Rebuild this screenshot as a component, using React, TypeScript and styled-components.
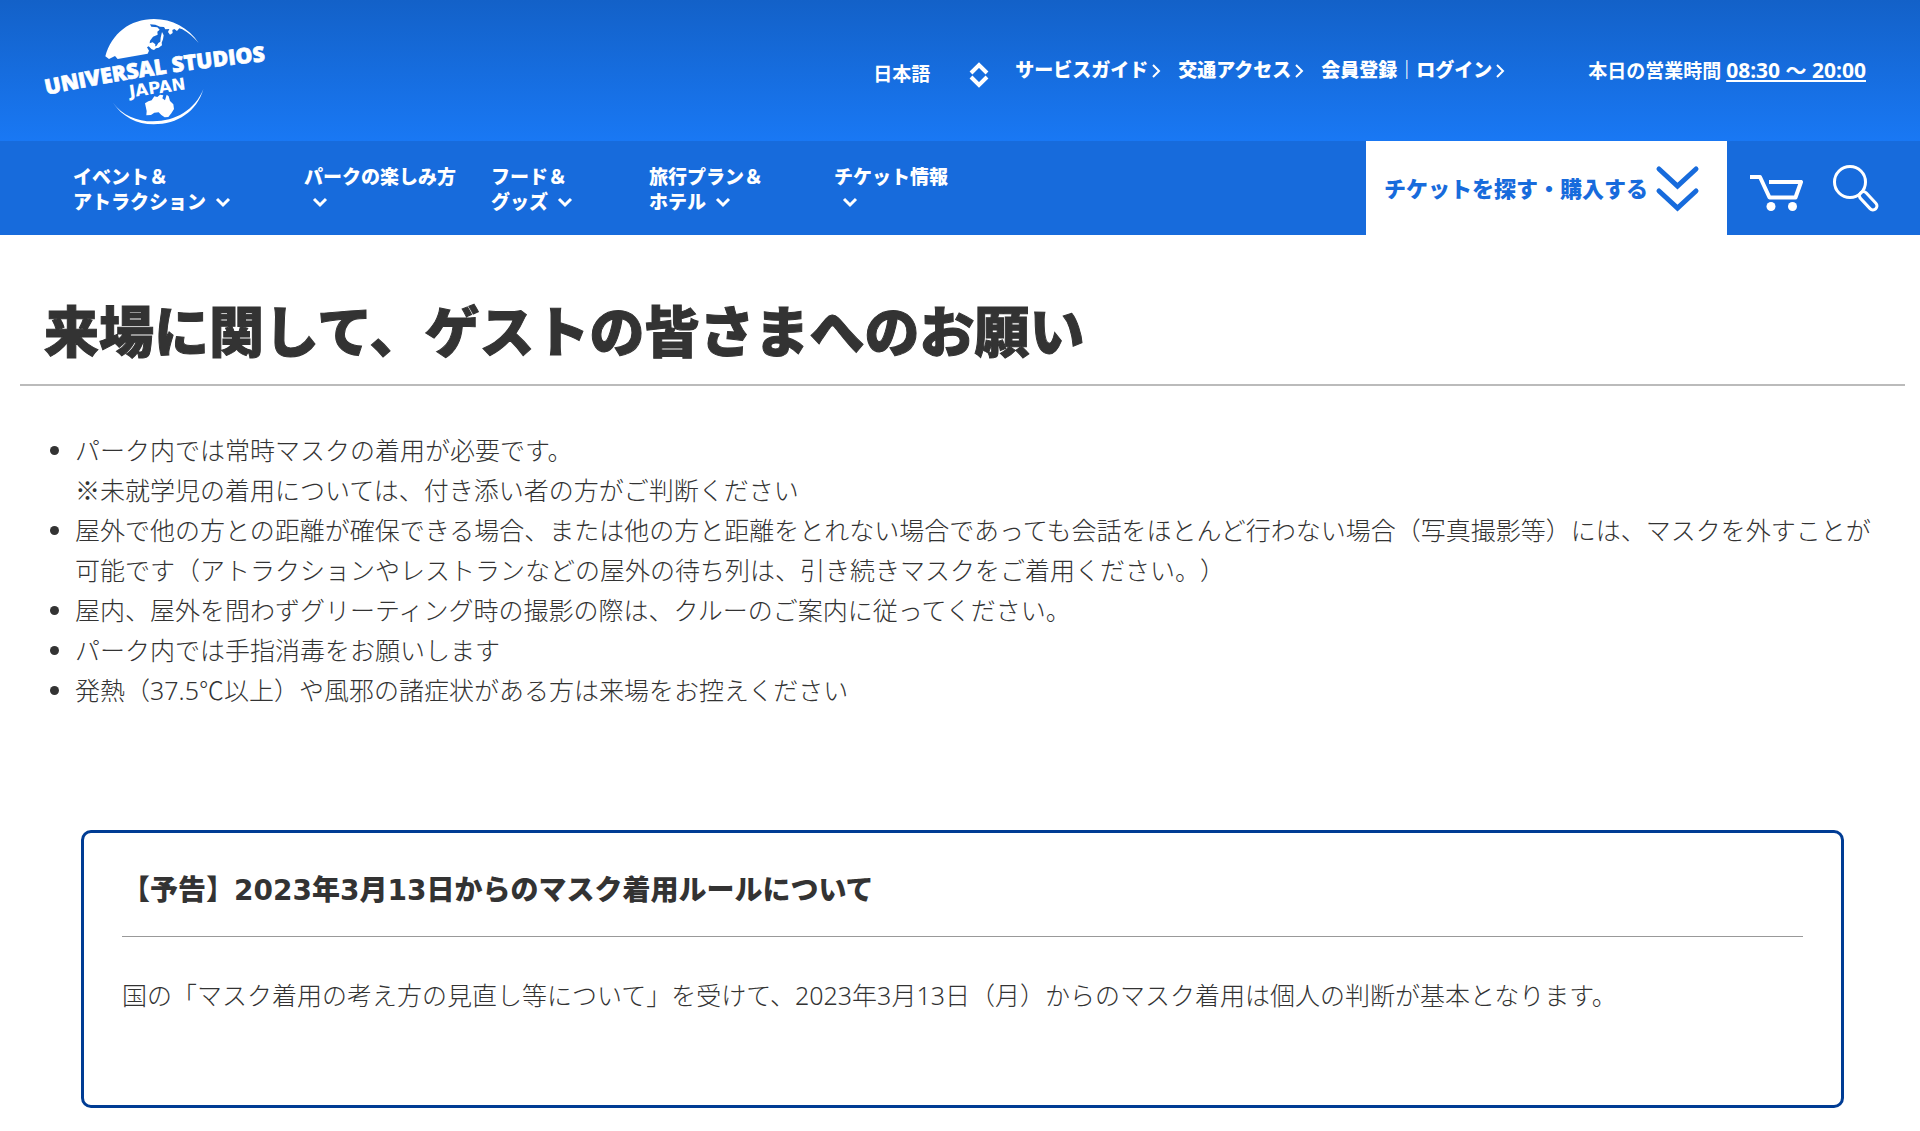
import React from "react";
import styled, { createGlobalStyle } from "styled-components";

const GlobalStyle = createGlobalStyle`
  *, *::before, *::after { box-sizing: border-box; }
  body {
    margin: 0;
    background: #fff;
    color: #333;
    font-family: "Noto Sans", "Noto Sans CJK JP", sans-serif;
    font-size: 25px;
    font-weight: 300;
    line-height: 40px;
    text-spacing-trim: space-all;
  }
  h1, h2, p, ul { margin: 0; padding: 0; }
  a { color: inherit; text-decoration: none; }
  button, select { font: inherit; color: inherit; background: none; border: 0; padding: 0; cursor: pointer; }
  svg { display: block; flex: none; overflow: visible; }
`;

const Header = styled.header`
  color: #fff;
  font-size: 19px;
  line-height: 25px;
  font-weight: 900;
`;

const TopBar = styled.div`
  display: flex;
  align-items: center;
  justify-content: space-between;
  height: 141px;
  padding: 0 54px 0 44px;
  background: linear-gradient(#1361c8, #1978f4);
`;

const Utilities = styled.div`
  display: flex;
  align-items: center;
  gap: 26px;
`;

const LanguagePicker = styled.label`
  display: grid;
  grid-template-columns: 96px 20px;
  align-items: center;
  padding-top: 8px;

  select {
    grid-area: 1 / 1 / 2 / 3;
    appearance: none;
    font-weight: 700;
    height: 25px;
  }
  svg {
    grid-area: 1 / 2 / 2 / 3;
    pointer-events: none;
  }
`;

const UtilityLinks = styled.nav`
  display: flex;
  gap: 17px;
`;

const UtilityLink = styled.a`
  display: flex;
  align-items: center;
  gap: 4px;
`;

const Hours = styled.p`
  margin-left: 57px;
  font-weight: 700;

  a {
    font-size: 21px;
    text-decoration: underline;
  }
`;

const MainNav = styled.nav`
  display: flex;
  height: 94px;
  padding-left: 73px;
  background: #176bdc;
`;

const Menu = styled.ul`
  display: flex;
  flex: 1;
  padding-top: 24px;
  list-style: none;
`;

const MenuItem = styled.li<{ $width: number }>`
  width: ${(p) => p.$width}px;
`;

const MenuButton = styled.button`
  text-align: left;
  white-space: nowrap;
`;

const MenuLine = styled.span<{ $indent?: boolean }>`
  display: flex;
  align-items: center;
  gap: 9px;
  height: 25px;
  padding-left: ${(p) => (p.$indent ? 8 : 0)}px;
`;

const TicketButton = styled.button`
  display: flex;
  align-items: center;
  gap: 8px;
  padding: 0 28px 0 18px;
  background: #fff;
  color: #176bdc;
  font-size: 22px;
`;

const IconLinks = styled.div`
  display: flex;
  align-items: center;
  gap: 29px;
  padding: 0 41px 0 23px;
`;

const Main = styled.main`
  padding: 57px 15px 25px 20px;
`;

const PageTitle = styled.h1`
  padding: 0 24px 14px;
  border-bottom: 2px solid #bbb;
  font-size: 55px;
  line-height: 78px;
  font-weight: 900;
  -webkit-text-stroke: 1px #333;
`;

const NoticeList = styled.ul`
  padding: 44px 20px 0 55px;
`;

const FullWidth = styled.span`
  font-family: "Noto Sans CJK JP", sans-serif;
  line-height: 1;
`;

const NoticeBox = styled.section`
  margin: 120px 61px 0;
  padding: 28px 38px 90px;
  border: 3px solid #003c94;
  border-radius: 10px;
`;

const NoticeTitle = styled.h2`
  margin-bottom: 38px;
  padding: 10px 0 25px;
  border-bottom: 1px solid #999;
  font-family: "DejaVu Sans", "Noto Sans CJK JP", sans-serif;
  font-size: 28px;
  line-height: 40px;
  font-weight: 900;
`;

const Logo = () => (
  <svg width="224" height="108" viewBox="72 48 672 324" fill="#fff" role="img" aria-label="UNIVERSAL STUDIOS JAPAN">
    <path d="M256 166C274 98 330 54 402 54c54 0 104 26 134 72-14-16-31-31-49-41l-9-3-7 8-8-6-6 3 1 9-8 5-6-8 4-9-12 1-4-7-12-1-14-6-16-1 4 7 18 2 7 7-7 6 1 9-14 6-9 12-1 8 9-3 8 6-1 14-10 1-9-9-5 3 6 10-4 9-90 16-8-9-18 9Z" />
    <path d="M426 93l5 10-2 12-4 10 1 8-10 7-8 2-6 5-6-2 5-7 9-4 5-8 6-4 1-12Z" />
    <path d="M279 305c28 38 71 56 120 56 68 0 125-34 151-96-20 67-77 105-149 105-51 0-95-24-122-65Z" />
    <path d="M375 307l10-6 10-3 8-12 9 2 8-7 10 2-3 9 8 6 5-17 6 5 4 14 10 10 2 14-8 13-9 11-11 1-10-7-8-8-13 1-10 7-14 1 1-13Z" />
    <path id="logo-arc" d="M80 282Q390 214 800 174" fill="none" />
    <text fontFamily="'Open Sans', 'Noto Sans', sans-serif" fontWeight="800" fontSize="64" stroke="#fff" strokeWidth="2">
      <textPath href="#logo-arc">UNIVERSAL STUDIOS</textPath>
    </text>
    <text transform="translate(414 277) rotate(-8)" textAnchor="middle" fontFamily="'DejaVu Sans', sans-serif" fontWeight="700" fontSize="50">
      JAPAN
    </text>
  </svg>
);

const SortArrows = () => (
  <svg width="20" height="24" viewBox="0 0 20 24" fill="none" stroke="#fff" strokeWidth="4">
    <path d="M2 10l8-8 8 8M2 14l8 8 8-8" />
  </svg>
);

const RightChevron = () => (
  <svg width="9" height="14" viewBox="0 0 9 14" fill="none" stroke="#fff" strokeWidth="2">
    <path d="M1 1l6 6-6 6" />
  </svg>
);

const DownChevron = () => (
  <svg width="16" height="10" viewBox="0 0 16 10" fill="none" stroke="#fff" strokeWidth="3">
    <path d="M2 1l6 6 6-6" />
  </svg>
);

const DoubleChevron = () => (
  <svg width="43" height="44" viewBox="0 0 43 44" fill="none" stroke="#176bdc" strokeWidth="5" strokeLinecap="round">
    <path d="M3 3l18.500 17L40 3M3 25l18.500 17L40 25" />
  </svg>
);

const CartIcon = () => (
  <svg width="54" height="46" viewBox="0 -9 54 46" fill="none" stroke="#fff" strokeWidth="4">
    <path d="M2 3h8l9.500 20.500h26L51 8H19" strokeLinejoin="round" />
    <path d="M0 3h4" />
    <circle cx="21" cy="32.500" r="4.500" fill="#fff" stroke="none" />
    <circle cx="42.500" cy="32.500" r="4.500" fill="#fff" stroke="none" />
  </svg>
);

const SearchIcon = () => (
  <svg width="46" height="46" viewBox="0 0 46 46" fill="none" stroke="#fff" strokeWidth="3">
    <circle cx="17" cy="17" r="15.500" />
    <rect x="-4" y="1" width="8" height="22" rx="4" transform="translate(27 27) rotate(-43)" />
  </svg>
);

const utilityLinks = ["サービスガイド", "交通アクセス", "会員登録｜ログイン"];

const menuItems = [
  { lines: ["イベント＆", "アトラクション"], width: 231 },
  { lines: ["パークの楽しみ方", ""], width: 187 },
  { lines: ["フード＆", "グッズ"], width: 158 },
  { lines: ["旅行プラン＆", "ホテル"], width: 185 },
  { lines: ["チケット情報", ""], width: 130 },
];

export default function App() {
  return (
    <>
      <GlobalStyle />
      <Header>
        <TopBar>
          <a href="#home">
            <Logo />
          </a>
          <Utilities>
            <LanguagePicker>
              <select aria-label="言語" defaultValue="ja">
                <option value="ja">日本語</option>
              </select>
              <SortArrows />
            </LanguagePicker>
            <UtilityLinks>
              {utilityLinks.map((label) => (
                <UtilityLink href="#" key={label}>
                  {label}
                  <RightChevron />
                </UtilityLink>
              ))}
            </UtilityLinks>
            <Hours>
              本日の営業時間 <a href="#hours">08:30 ～ 20:00</a>
            </Hours>
          </Utilities>
        </TopBar>
        <MainNav>
          <Menu>
            {menuItems.map(({ lines, width }) => (
              <MenuItem key={lines[0]} $width={width}>
                <MenuButton type="button">
                  <MenuLine>{lines[0]}</MenuLine>
                  <MenuLine $indent={!lines[1]}>
                    {lines[1]}
                    <DownChevron />
                  </MenuLine>
                </MenuButton>
              </MenuItem>
            ))}
          </Menu>
          <TicketButton type="button">
            チケットを探す・購入する
            <DoubleChevron />
          </TicketButton>
          <IconLinks>
            <a href="#cart" aria-label="カート">
              <CartIcon />
            </a>
            <a href="#search" aria-label="検索">
              <SearchIcon />
            </a>
          </IconLinks>
        </MainNav>
      </Header>
      <Main>
        <PageTitle>来場に関して、ゲストの皆さまへのお願い</PageTitle>
        <NoticeList>
          <li>
            パーク内では常時マスクの着用が必要です。
            <br />
            <FullWidth>※</FullWidth>未就学児の着用については、付き添い者の方がご判断ください
          </li>
          <li>
            屋外で他の方との距離が確保できる場合、または他の方と距離をとれない場合であっても会話をほとんど行わない場合（写真撮影等）には、マスクを外すことが可能です（アトラクションやレストランなどの屋外の待ち列は、引き続きマスクをご着用ください。）
          </li>
          <li>屋内、屋外を問わずグリーティング時の撮影の際は、クルーのご案内に従ってください。</li>
          <li>パーク内では手指消毒をお願いします</li>
          <li>
            発熱（37.5<FullWidth>℃</FullWidth>以上）や風邪の諸症状がある方は来場をお控えください
          </li>
        </NoticeList>
        <NoticeBox>
          <NoticeTitle>【予告】2023年3月13日からのマスク着用ルールについて</NoticeTitle>
          <p>国の「マスク着用の考え方の見直し等について」を受けて、2023年3月13日（月）からのマスク着用は個人の判断が基本となります。</p>
        </NoticeBox>
      </Main>
    </>
  );
}
